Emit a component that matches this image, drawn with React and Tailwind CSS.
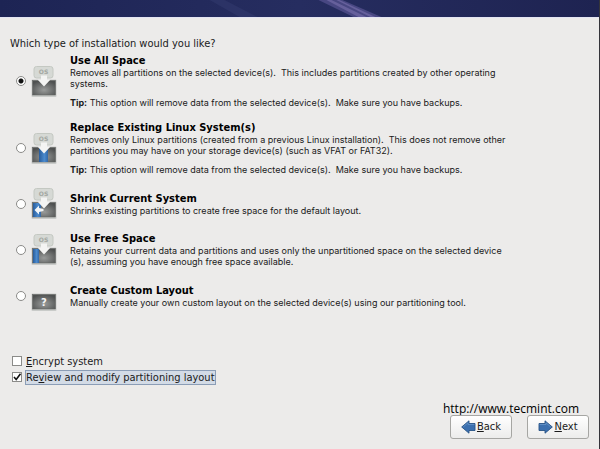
import React from "react";

function DiskIcon({ kind }) {
  const custom = kind === "custom";
  return (
    <svg width="26" height="31" viewBox="0 0 26 31" className="shrink-0" aria-hidden="true">
      <defs>
        <radialGradient id={`disk-${kind}`} cx="50%" cy="65%" r="65%">
          <stop offset="0" stopColor="#999b9a" />
          <stop offset="1" stopColor="#4f5151" />
        </radialGradient>
        <linearGradient id={`used-${kind}`} x1="0" y1="0" x2="1" y2="0">
          <stop offset="0" stopColor="#285c9b" />
          <stop offset="0.6" stopColor="#4c8bce" />
          <stop offset="1" stopColor="#3268a8" />
        </linearGradient>
      </defs>
      <rect x="0.5" y="13.5" width="25" height="17.5" rx="1" fill="#c9cbc9" />
      <rect x="1.5" y="14.5" width="23" height="14.5" fill={`url(#disk-${kind})`} stroke="#666867" strokeWidth="0.6" />
      {kind === "replace" && <rect x="8" y="15" width="9" height="14" fill={`url(#used-${kind})`} />}
      {kind === "shrink" && <rect x="2" y="15" width="8" height="14" fill={`url(#used-${kind})`} />}
      {kind === "free" && <rect x="2" y="15" width="6" height="14" fill={`url(#used-${kind})`} />}
      {kind === "shrink" && (
        <path d="M3.5 22 L8 17.5 V20 L12.5 21 V23 L8 24 V26.5 Z" fill="#f2f5f8" />
      )}
      {!custom && (
        <>
          <rect x="3" y="0.5" width="19" height="11.5" rx="2.5" fill="#d6d9d5" stroke="#c4c8c2" />
          <text x="12.5" y="8" textAnchor="middle" fontSize="6" fontWeight="bold" fill="#a3a7a2" className="font-['DejaVu_Sans',sans-serif]">OS</text>
          <path d="M10 9.5 H16 V13.5 H19.5 L13 20.5 L6.5 13.5 H10 Z" fill="#f4f4f3" />
        </>
      )}
      {custom && (
        <text x="13" y="26" textAnchor="middle" fontSize="10" fontWeight="bold" fill="#f4f4f4" className="font-['DejaVu_Sans',sans-serif]">?</text>
      )}
    </svg>
  );
}

const backupTip = "This option will remove data from the selected device(s).  Make sure you have backups.";

const options = [
  {
    id: "all",
    title: "Use All Space",
    lines: ["Removes all partitions on the selected device(s).  This includes partitions created by other operating", "systems."],
    tip: backupTip,
  },
  {
    id: "replace",
    title: "Replace Existing Linux System(s)",
    lines: ["Removes only Linux partitions (created from a previous Linux installation).  This does not remove other", "partitions you may have on your storage device(s) (such as VFAT or FAT32)."],
    tip: backupTip,
  },
  {
    id: "shrink",
    title: "Shrink Current System",
    lines: ["Shrinks existing partitions to create free space for the default layout."],
  },
  {
    id: "free",
    title: "Use Free Space",
    lines: ["Retains your current data and partitions and uses only the unpartitioned space on the selected device", "(s), assuming you have enough free space available."],
  },
  {
    id: "custom",
    title: "Create Custom Layout",
    lines: ["Manually create your own custom layout on the selected device(s) using our partitioning tool."],
  },
];

function Option({ option, defaultChecked }) {
  return (
    <label className="flex items-center">
      <input
        type="radio"
        name="install-type"
        defaultChecked={defaultChecked}
        className="size-[10px] shrink-0 appearance-none rounded-full border border-[#8b8b89] bg-white checked:bg-[radial-gradient(circle,#111_0_2px,#fff_3px)]"
      />
      <span className="ml-[5px] flex">
        <DiskIcon kind={option.id} />
      </span>
      <span className="ml-[13px] block whitespace-pre font-['Inter','DejaVu_Sans',sans-serif] text-[9px] leading-[11px]">
        <span className="block font-['DejaVu_Sans_Condensed','DejaVu_Sans',sans-serif] text-[11px] font-bold leading-[13px] text-black">{option.title}</span>
        {option.lines.map((line) => (
          <span key={line} className="block">{line}</span>
        ))}
        {option.tip && (
          <span className="mt-2 block">
            <b>Tip:</b> {option.tip}
          </span>
        )}
      </span>
    </label>
  );
}

const boxClass =
  "flex size-[10px] shrink-0 appearance-none border border-[#8b8b89] bg-white";

function Check({ id, defaultChecked, focused, children }) {
  return (
    <div className="flex h-4 items-center">
      <span className="relative flex">
        <input id={id} type="checkbox" defaultChecked={defaultChecked} className={`peer ${boxClass}`} />
        <svg viewBox="0 0 10 10" className="pointer-events-none absolute inset-0 hidden size-[10px] peer-checked:block" aria-hidden="true">
          <path d="M2 5 L4.2 7.5 L8.5 1.8" fill="none" stroke="#111" strokeWidth="1.6" />
        </svg>
      </span>
      <label
        htmlFor={id}
        className={`ml-[3px] border text-[11px] leading-[13px] ${focused ? "border-[#8b9db6] bg-[#d3dbe6]" : "border-transparent"}`}
      >
        {children}
      </label>
    </div>
  );
}

function Arrow({ flip }) {
  return (
    <svg width="15" height="14" viewBox="0 0 15 14" className={flip ? "-scale-x-100" : ""} aria-hidden="true">
      <path d="M1 3.5 H7 V0.8 L14.3 7 L7 13.2 V10.5 H1 Z" fill="#3c70af" stroke="#285486" strokeWidth="0.9" />
      <path d="M1.6 4.5 H8 V2.8 L12.8 7" fill="none" stroke="#6796c9" strokeWidth="0.8" />
    </svg>
  );
}

const buttonClass =
  "flex h-6 w-[62px] items-center justify-center gap-px rounded-[3px] border border-[#a6a6a3] bg-linear-to-b from-white to-[#ececeb] text-[11px]";

export default function App() {
  return (
    <div className="flex min-h-screen flex-col border-r border-[#34343a] bg-[#ecebea] font-['DejaVu_Sans_Condensed','DejaVu_Sans',sans-serif] text-[#1a1a1a]">
      <header className="h-[17px] overflow-hidden bg-linear-to-r from-[#1d2454] via-[#262d60] to-[#1e2351]">
        <svg width="100%" height="17" preserveAspectRatio="none" viewBox="0 0 600 17" aria-hidden="true">
          <path d="M210 0 H225 L258 17 H240 Z" fill="#333b70" opacity="0.5" />
          <path d="M319 0 H343 L382 17 H354 Z" fill="#484782" />
          <path d="M327 0 H332 L367 17 H359 Z M337 0 H340 L376 17 H371 Z" fill="#66609c" />
        </svg>
      </header>
      <main className="flex flex-1 flex-col border-t border-[#e3e4f2] px-[10px] pb-[10px]">
        <h1 className="mt-[19px] text-[11px] leading-[14px]">
          Which type of installation would you like?
        </h1>
        <div role="radiogroup" aria-label="Installation type" className="mt-[3px] flex flex-col gap-[13px] pl-[6px]">
          {options.map((option, i) => (
            <Option key={option.id} option={option} defaultChecked={i === 0} />
          ))}
        </div>
        <div className="mt-auto pl-[2px]">
          <Check id="encrypt"><u>E</u>ncrypt system</Check>
          <Check id="review" defaultChecked focused>Re<u>v</u>iew and modify partitioning layout</Check>
        </div>
        <footer className="mt-[17px] flex flex-col items-end">
          <p className="mr-[10px] font-['Open_Sans','Noto_Sans',sans-serif] text-[12px] leading-[13px] text-black">http://www.tecmint.com</p>
          <div className="flex gap-[15px]">
            <button type="button" className={buttonClass}><Arrow flip /><span><u>B</u>ack</span></button>
            <button type="button" className={buttonClass}><Arrow /><span><u>N</u>ext</span></button>
          </div>
        </footer>
      </main>
    </div>
  );
}
